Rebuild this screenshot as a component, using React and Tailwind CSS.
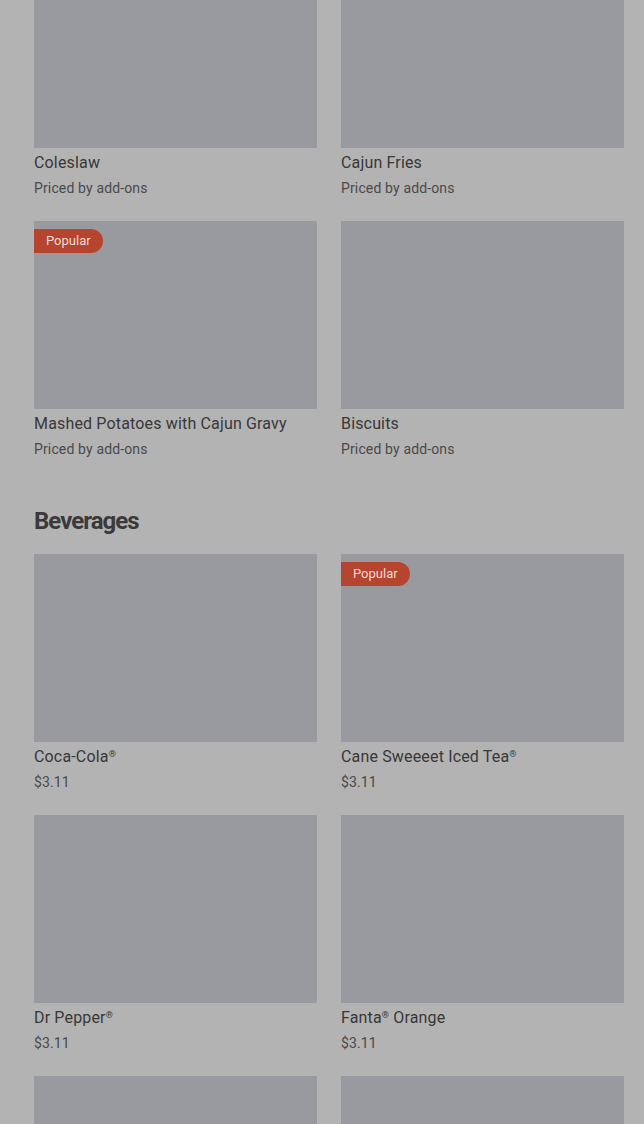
const sides = [
  { name: "Coleslaw", price: "Priced by add-ons" },
  { name: "Cajun Fries", price: "Priced by add-ons" },
  { name: "Mashed Potatoes with Cajun Gravy", price: "Priced by add-ons", popular: true },
  { name: "Biscuits", price: "Priced by add-ons" },
];

const drinks = [
  { name: "Coca-Cola", reg: true, price: "$3.11" },
  { name: "Cane Sweeeet Iced Tea", reg: true, price: "$3.11", popular: true },
  { name: "Dr Pepper", reg: true, price: "$3.11" },
  { name: "Fanta", reg: true, suffix: " Orange", price: "$3.11" },
  { name: "", price: "" },
  { name: "", price: "" },
];

const ItemCard = ({ item }) => (
  <div className="flex flex-col">
    <div className="relative h-[188px] bg-[#989aa0]">
      {item.popular && (
        <span className="absolute left-0 top-2 h-6 px-3 flex items-center rounded-r-full bg-[#b5452f] text-[13px] text-[#efd9d3]">
          Popular
        </span>
      )}
    </div>
    {item.name && (
      <>
        <p className="mt-[5px] h-5 text-[16px] leading-5 tracking-[0.01em] text-[#383838]">
          {item.name}
          {item.reg && <span className="relative -top-[5px] text-[9px] leading-none">®</span>}
          {item.suffix}
        </p>
        <p className="mt-[5px] text-[14px] leading-5 tracking-[0.01em] text-[#4a4a4a]">{item.price}</p>
      </>
    )}
  </div>
);

export default function App() {
  return (
    <div className="h-[1124px] overflow-hidden bg-[#b3b3b3] font-['Roboto',sans-serif]">
      <div className="pl-[34px] pr-[20px] -mt-[40px]">
        <div className="grid grid-cols-2 gap-x-6 gap-y-[23px]">
          {sides.map((s) => (
            <ItemCard key={s.name} item={s} />
          ))}
        </div>

        <h2 className="mt-[46px] text-[24px] leading-8 font-bold tracking-[-0.04em] text-[#3a3a3a]">
          Beverages
        </h2>

        <div className="mt-[17px] grid grid-cols-2 gap-x-6 gap-y-[23px]">
          {drinks.map((d, i) => (
            <ItemCard key={i} item={d} />
          ))}
        </div>
      </div>
    </div>
  );
}
